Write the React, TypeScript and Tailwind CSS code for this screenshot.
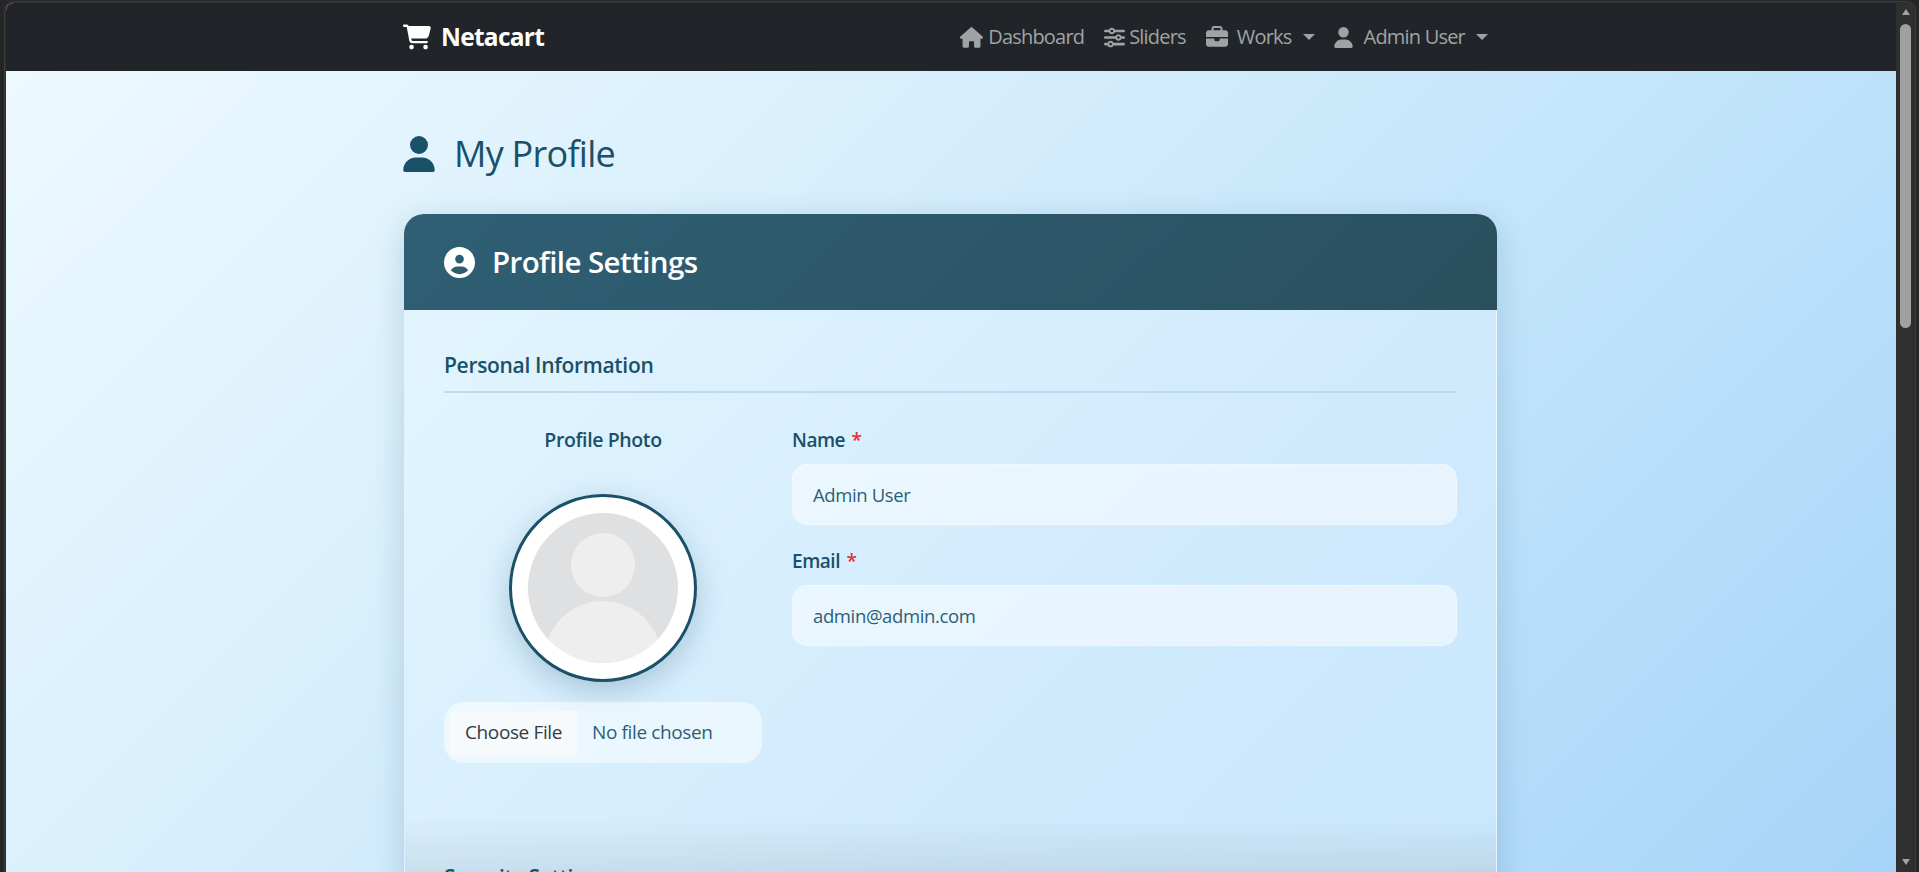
import { FC, ReactNode } from 'react';
import { FaBriefcase, FaCartShopping, FaCircleUser, FaHouse, FaSliders, FaUser } from 'react-icons/fa6';

const Caret: FC = () => (
  <span className="ml-[11px] inline-block h-0 w-0 border-x-[6px] border-t-[6px] border-x-transparent border-t-[#9fa2a5]" />
);

const NavLink: FC<{ icon: ReactNode; label: string; gap: string; caret?: boolean; className?: string }> = ({
  icon,
  label,
  gap,
  caret,
  className,
}) => (
  <a className={`flex items-center text-[20px] tracking-[-0.04em] text-[#a0a3a6] ${className ?? ''}`}>
    <span className={gap}>{icon}</span>
    <span>{label}</span>
    {caret && <Caret />}
  </a>
);

const Field: FC<{ label: string; value: string }> = ({ label, value }) => (
  <div className="flex flex-col">
    <label className="h-[24px] text-[19px] leading-[24px] font-semibold tracking-[-0.025em] text-[#1a5068]">
      {label} <span className="ml-[2px] text-[#dc3545]">*</span>
    </label>
    <div className="mt-[12px] flex h-[61px] items-center rounded-[15px] border border-white/30 bg-white/50 px-[20px] text-[18.5px] tracking-[-0.02em] text-[#2c5f75]">
      {value}
    </div>
  </div>
);

const Avatar: FC = () => (
  <div className="mt-[42px] h-[188px] w-[188px] rounded-full border-[3px] border-[#1a5068] bg-white p-[16px] shadow-[0_10px_30px_rgba(26,80,104,0.25)]">
    <svg viewBox="0 0 150 150" className="block h-[150px] w-[150px]">
      <clipPath id="avatar-clip">
        <circle cx="75" cy="75" r="75" />
      </clipPath>
      <g clipPath="url(#avatar-clip)">
        <rect width="150" height="150" fill="#dee0e1" />
        <circle cx="75" cy="52" r="32" fill="#eeeeee" />
        <circle cx="75" cy="147" r="59" fill="#eeeeee" />
      </g>
    </svg>
  </div>
);

const Scrollbar: FC = () => (
  <div className="flex w-[19px] shrink-0 flex-col items-start pl-[4px]">
    <span className="mt-[6px] ml-[2px] h-0 w-0 border-x-[4px] border-b-[6px] border-x-transparent border-b-[#a3a3a3]" />
    <span className="mt-[9px] h-[304px] w-[11px] rounded-full bg-[#a0a0a0]" />
    <span className="mt-auto mb-[7px] ml-[2px] h-0 w-0 border-x-[4px] border-t-[6px] border-x-transparent border-t-[#a3a3a3]" />
  </div>
);

export default function App() {
  return (
    <div className="flex h-[872px] overflow-hidden bg-[#262626] pt-px pr-[3px] pl-[4px] font-['Open_Sans','Noto_Sans',sans-serif]">
      <div className="flex min-w-0 flex-1 rounded-t-[10px] border-x border-t border-[#3c3c3c] bg-[#2e3030] pt-px pl-px">
        <div className="flex min-w-0 flex-1 flex-col overflow-hidden rounded-tl-lg bg-[linear-gradient(135deg,#eefaff_0%,#dcf1fd_30%,#c6e6fb_60%,#b7dffa_78%,#a6d4f8_100%)]">
          <nav className="flex h-[68px] shrink-0 bg-[#212529] pl-[398px]">
            <div className="flex w-[1093px] items-center">
              <a className="flex items-center text-[24.5px] font-bold tracking-[-0.03em] text-white">
                <FaCartShopping className="mr-[10px] ml-[-1px] text-[28px]" />
                Netacart
              </a>
              <div className="ml-auto flex items-center pr-[9px]">
                <NavLink icon={<FaHouse className="text-[23px]" />} label="Dashboard" gap="mr-[5px]" />
                <NavLink icon={<FaSliders className="text-[21px]" />} label="Sliders" gap="mr-[4px]" className="ml-[20px]" />
                <NavLink icon={<FaBriefcase className="text-[22px]" />} label="Works" gap="mr-[9px]" className="ml-[20px]" caret />
                <NavLink icon={<FaUser className="text-[21px]" />} label="Admin User" gap="mr-[10px]" className="ml-[18px]" caret />
              </div>
            </div>
          </nav>

          <main className="ml-[398px] w-[1093px] shrink-0">
            <h1 className="mt-[60px] flex h-[46px] items-center text-[36px] font-medium tracking-[-0.02em] text-[#1a5068]">
              <FaUser className="mr-[17px] ml-[-3px] text-[36px]" />
              My Profile
            </h1>

            <section className="mt-[37px] rounded-[20px] border border-white/40 bg-[linear-gradient(135deg,#e4f6ff_0%,#d0eafd_60%,#c8e6fc_100%)] shadow-[0_8px_32px_rgba(26,80,104,0.2)]">
              <header className="mx-[-1px] mt-[-1px] flex h-[96px] items-center rounded-t-[20px] bg-[linear-gradient(135deg,#2f5f74,#2a505f)] px-[40px] text-[29.5px] font-semibold tracking-[-0.02em] text-white">
                <FaCircleUser className="mr-[17px] text-[31px]" />
                Profile Settings
              </header>

              <div className="px-[39px] pt-[40px]">
                <h2 className="h-[30px] text-[21px] leading-[30px] font-semibold tracking-[-0.015em] text-[#1a5068]">
                  Personal Information
                </h2>
                <div className="mt-[11px] h-[2px] bg-[#bfdaec]" />

                <div className="mt-[35px] flex gap-[30px]">
                  <div className="flex w-[318px] shrink-0 flex-col items-center">
                    <div className="h-[24px] text-[19.5px] leading-[24px] font-semibold tracking-[-0.02em] text-[#1a5068]">
                      Profile Photo
                    </div>
                    <Avatar />
                    <div className="mt-[20px] flex h-[61px] w-full items-center rounded-[20px] bg-white/50 pl-[6px] text-[19px] tracking-[-0.02em]">
                      <span className="flex h-[44px] w-[127px] items-center justify-center bg-[#f6fafd] text-[#343a40]">
                        Choose File
                      </span>
                      <span className="ml-[15px] text-[#2c5f75]">No file chosen</span>
                    </div>
                  </div>

                  <div className="flex flex-1 flex-col gap-[24px]">
                    <Field label="Name" value="Admin User" />
                    <Field label="Email" value="admin@admin.com" />
                  </div>
                </div>
              </div>

              <div className="mt-[58px] h-[200px] border-t border-white/40 bg-[linear-gradient(180deg,rgba(110,125,125,0.01)_0,rgba(110,125,125,0.14)_50px)] px-[39px] pt-[40px] text-[21px] leading-[30px] font-semibold tracking-[-0.015em] text-[#1a5068]">
                Security Settings
              </div>
            </section>
          </main>
        </div>
        <Scrollbar />
      </div>
    </div>
  );
}
